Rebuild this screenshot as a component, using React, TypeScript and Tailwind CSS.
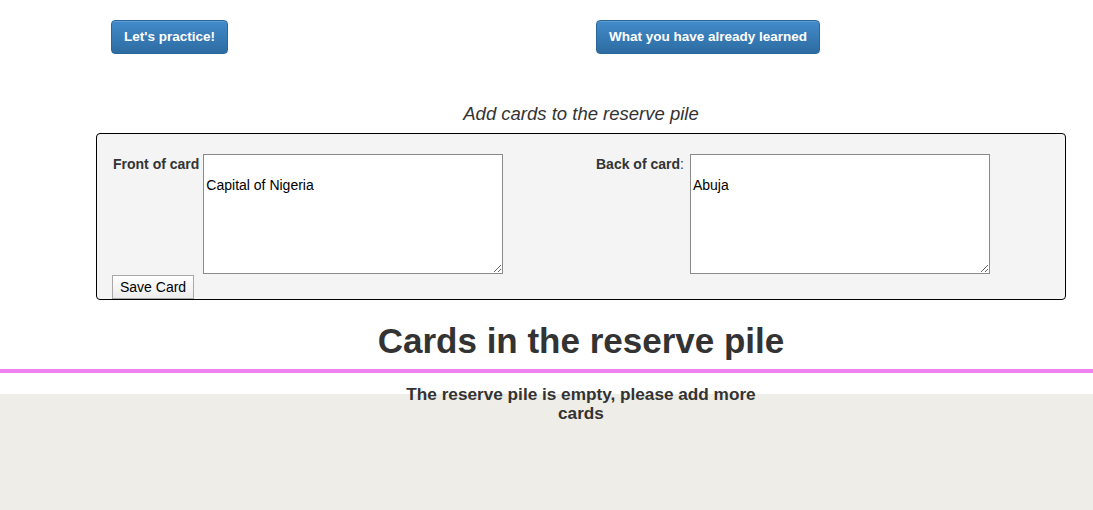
import React from "react";

const btnPrimary =
  "h-[34px] px-[12px] rounded-[4px] border border-[#2b669a] bg-gradient-to-b from-[#428bca] to-[#2d6ca2] text-white text-[13.5px] font-bold leading-[20px] shadow-[inset_0_1px_0_rgba(255,255,255,0.15)]";

const textareaCls =
  "w-[300px] h-[120px] bg-white border border-[#8a8a8a] px-[2px] pt-[2px] text-[14px] leading-[19px] text-black resize-y outline-none";

export default function App() {
  return (
    <div className="min-h-[510px] flex flex-col bg-white text-[#333] font-['Liberation_Sans',Arial,sans-serif]">
      <div className="ml-[96px] w-[970px]">
        <div className="grid grid-cols-2 pt-[20px]">
          <div className="px-[15px]">
            <button className={btnPrimary}>Let's practice!</button>
          </div>
          <div className="px-[15px]">
            <button className={btnPrimary}>What you have already learned</button>
          </div>
        </div>

        <p className="mt-[48px] text-center italic text-[18.5px] leading-[24px]">
          Add cards to the reserve pile
        </p>

        <div className="mt-[7px] border border-black rounded-[4px] bg-[#f4f4f4] grid grid-cols-2 pt-[20px] h-[167px]">
          <div className="px-[15px]">
            <div className="flex items-start">
              <label className="pt-[2px] pr-[4px] pl-[1px] text-[14px] font-bold leading-[16px]">
                Front of card
              </label>
              <textarea defaultValue={"\nCapital of Nigeria"} className={textareaCls} />
            </div>
            <button className="mt-[1px] h-[24px] px-[7px] border border-[#a8a8a8] bg-gradient-to-b from-white to-[#ececec] text-[14px] text-black leading-[16px]">
              Save Card
            </button>
          </div>
          <div className="px-[15px]">
            <div className="flex items-start">
              <label className="pt-[2px] pr-[6px] text-[14px] font-bold leading-[16px]">
                Back of card<span className="font-normal">:</span>
              </label>
              <textarea defaultValue={"\nAbuja"} className={textareaCls} />
            </div>
          </div>
        </div>

        <h2 className="mt-[21px] text-center text-[35px] font-bold leading-[40px] text-[#333]">
          Cards in the reserve pile
        </h2>
      </div>

      <div className="mt-[8px] h-[4px] bg-[#ee82ee]" />

      <div className="mt-[21px] flex-1 bg-[#eeede8]">
        <div className="ml-[96px] w-[970px] flex justify-center">
          <p className="-mt-[9px] w-[370px] text-center text-[17.2px] font-bold leading-[19px] text-[#333]">
            The reserve pile is empty, please add more cards
          </p>
        </div>
      </div>
    </div>
  );
}
